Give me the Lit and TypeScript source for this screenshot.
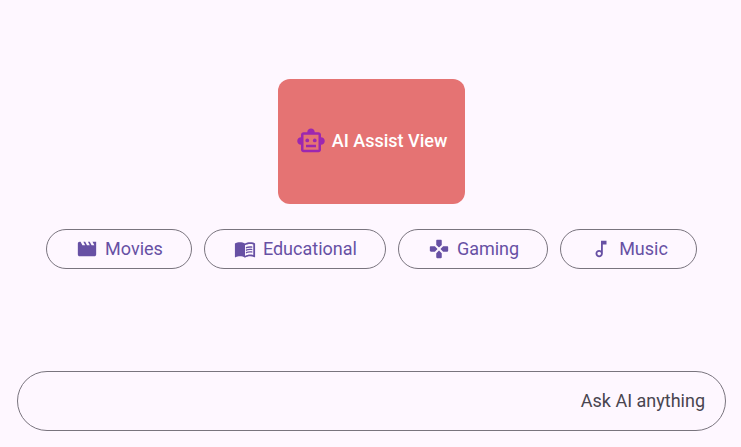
import { LitElement, html, css, svg } from "lit";
import { customElement } from "lit/decorators.js";

const robot = svg`
  <path fill-rule="evenodd" d="M20 9V7c0-1.1-.9-2-2-2h-3c0-1.66-1.34-3-3-3S9 3.34 9 5H6c-1.1 0-2 .9-2 2v2c-1.66 0-3 1.34-3 3s1.34 3 3 3v4c0 1.1.9 2 2 2h12c1.1 0 2-.9 2-2v-4c1.66 0 3-1.34 3-3s-1.34-3-3-3zM18 19H6V7h12v12z"/>
  <circle cx="9" cy="11.5" r="1.5"/>
  <circle cx="15" cy="11.5" r="1.5"/>
  <path d="M8 15h8v2H8z"/>`;

const movie = svg`<path d="M18 4l2 4h-3l-2-4h-2l2 4h-3l-2-4H8l2 4H7L5 4H4c-1.1 0-1.99.9-1.99 2L2 18c0 1.1.9 2 2 2h16c1.1 0 2-.9 2-2V4h-4z"/>`;

const book = svg`
  <path d="M21 5c-1.11-.35-2.33-.5-3.5-.5-1.95 0-4.05.4-5.5 1.5-1.45-1.1-3.55-1.5-5.5-1.5S2.45 4.9 1 6v14.65c0 .25.25.5.5.5.1 0 .15-.05.25-.05C3.1 20.45 5.05 20 6.5 20c1.95 0 4.05.4 5.5 1.5 1.35-.85 3.8-1.5 5.5-1.5 1.65 0 3.35.3 4.75 1.05.1.05.15.05.25.05.25 0 .5-.25.5-.5V6c-.6-.45-1.25-.75-2-1zm0 13.5c-1.1-.35-2.3-.5-3.5-.5-1.7 0-4.15.65-5.5 1.5V8c1.35-.85 3.8-1.5 5.5-1.5 1.2 0 2.4.15 3.5.5v11.5z"/>
  <path d="M17.5 10.5c.88 0 1.73.09 2.5.26V9.24c-.79-.15-1.64-.24-2.5-.24-1.7 0-3.24.29-4.5.83v1.66c1.13-.64 2.7-.99 4.5-.99zM13 12.49v1.66c1.13-.64 2.7-.99 4.5-.99.88 0 1.73.09 2.5.26V11.9c-.79-.15-1.64-.24-2.5-.24-1.7 0-3.24.3-4.5.83zM17.5 14.33c-1.7 0-3.24.29-4.5.83v1.66c1.13-.64 2.7-.99 4.5-.99.88 0 1.73.09 2.5.26v-1.52c-.79-.16-1.64-.24-2.5-.24z"/>`;

const armPath = "M15 7.5V3c0-.55-.45-1-1-1h-4c-.55 0-1 .45-1 1v4.5l2.65 2.65c.2.2.5.2.7 0L15 7.5z";
const games = svg`${[0, 90, 180, 270].map(
  (angle) => svg`<path d=${armPath} transform="rotate(${angle} 12 12)"/>`
)}`;

const note = svg`<path fill-rule="evenodd" d="M12 3l.01 10.55c-.59-.34-1.27-.55-2-.55C7.79 13 6 14.79 6 17s1.79 4 4.01 4S14 19.21 14 17V7h4V3h-6zm-1.99 16c-1.1 0-2-.9-2-2s.9-2 2-2 2 .9 2 2-.9 2-2 2z"/>`;

const suggestions = [
  { label: "Movies", icon: movie },
  { label: "Educational", icon: book },
  { label: "Gaming", icon: games },
  { label: "Music", icon: note },
];

@customElement("app-root")
export class AppRoot extends LitElement {
  static styles = css`
    :host {
      display: flex;
      flex-direction: column;
      box-sizing: border-box;
      min-height: 100vh;
      padding: 16px 15px 16px 17px;
      background: #fef7ff;
      font-family: Roboto, "Liberation Sans", sans-serif;
      font-size: 18px;
      line-height: 24px;
    }
    .welcome {
      flex: 1;
      display: flex;
      flex-direction: column;
      align-items: center;
      justify-content: center;
      gap: 25px;
      padding-bottom: 40px;
    }
    .card {
      display: flex;
      align-items: center;
      gap: 6px;
      box-sizing: border-box;
      height: 125px;
      padding: 0 18px;
      border-radius: 12px;
      background: #e57373;
      color: #fff;
    }
    .title {
      margin: 0;
      font-size: 18px;
      font-weight: 500;
    }
    .icon {
      flex: none;
      width: 22px;
      height: 22px;
      fill: currentColor;
    }
    .robot {
      width: 30px;
      height: 30px;
      color: #9c27b0;
    }
    .chips {
      display: flex;
      flex-wrap: wrap;
      justify-content: center;
      gap: 12px;
    }
    .chip {
      display: flex;
      align-items: center;
      gap: 7px;
      height: 40px;
      padding: 0 28px 0 29px;
      border: 1px solid #79747e;
      border-radius: 20px;
      background: transparent;
      color: #6750a4;
      font: inherit;
      cursor: pointer;
    }
    .prompt {
      box-sizing: border-box;
      width: 100%;
      height: 60px;
      padding: 0 20px 2px;
      border: 1px solid #79747e;
      border-radius: 30px;
      background: transparent;
      color: #1d1b20;
      font: inherit;
      text-align: right;
      outline: none;
    }
    .prompt::placeholder {
      color: #49454f;
      opacity: 1;
    }
  `;

  render() {
    return html`
      <main class="welcome">
        <div class="card">
          <svg class="icon robot" viewBox="0 0 24 24" aria-hidden="true">${robot}</svg>
          <h1 class="title">AI Assist View</h1>
        </div>
        <div class="chips">
          ${suggestions.map(
            ({ label, icon }) => html`
              <button class="chip" type="button">
                <svg class="icon" viewBox="0 0 24 24" aria-hidden="true">${icon}</svg>
                ${label}
              </button>
            `
          )}
        </div>
      </main>
      <input class="prompt" type="text" placeholder="Ask AI anything" aria-label="Ask AI anything" />
    `;
  }
}
